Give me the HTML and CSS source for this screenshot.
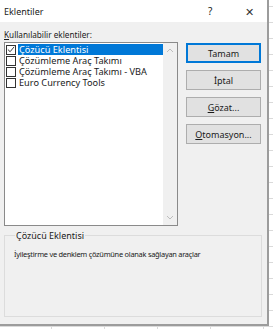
FILE: index.html
```html
<!DOCTYPE html>
<html lang="tr">
<head>
    <meta charset="UTF-8">
    <title>Eklentiler</title>
    <link rel="stylesheet" href="styles.css">
</head>
<body>
    <!-- Diyalog penceresi -->
    <div class="dialog">
        <div class="titlebar">
            <span class="title">Eklentiler</span>
            <span class="help">?</span>
            <span class="close">✕</span>
        </div>

        <div class="dialog-body">
            <div class="list-label"><u>K</u>ullanılabilir eklentiler:</div>

            <div class="main-row">
                <!-- Eklenti listesi -->
                <div class="listbox">
                    <div class="items">
                        <div class="item selected">
                            <span class="check checked">
                                <svg width="9" height="9" viewBox="0 0 9 9"><path d="M1 4.5 L3.5 7 L8 1.5" fill="none" stroke="#222" stroke-width="1"/></svg>
                            </span>
                            <span class="item-text">Çözücü Eklentisi</span>
                        </div>
                        <div class="item">
                            <span class="check"></span>
                            <span class="item-text">Çözümleme Araç Takımı</span>
                        </div>
                        <div class="item">
                            <span class="check"></span>
                            <span class="item-text">Çözümleme Araç Takımı - VBA</span>
                        </div>
                        <div class="item">
                            <span class="check"></span>
                            <span class="item-text">Euro Currency Tools</span>
                        </div>
                    </div>
                    <div class="scrollbar">
                        <svg width="8" height="6" viewBox="0 0 8 6"><path d="M1 5 L4 2 L7 5" fill="none" stroke="#bdbdbd" stroke-width="1"/></svg>
                        <svg width="8" height="6" viewBox="0 0 8 6"><path d="M1 1 L4 4 L7 1" fill="none" stroke="#bdbdbd" stroke-width="1"/></svg>
                    </div>
                </div>

                <!-- Butonlar -->
                <div class="buttons">
                    <button class="btn default">Tamam</button>
                    <button class="btn">İptal</button>
                    <button class="btn"><u>G</u>özat...</button>
                    <button class="btn"><u>O</u>tomasyon...</button>
                </div>
            </div>

            <!-- Açıklama kutusu -->
            <fieldset class="groupbox">
                <legend>Çözücü Eklentisi</legend>
                <p class="desc">İyileştirme ve denklem çözümüne olanak sağlayan araçlar</p>
            </fieldset>
        </div>
    </div>
</body>
</html>
```

FILE: styles.css
```css
body {
    margin: 0;
    width: 273px;
    height: 329px;
    overflow: hidden;
    font-family: 'Noto Sans', 'Open Sans', sans-serif;
    color: #1a1a1a;
    /* Excel hücre çizgileri */
    background-color: #fff;
    background-image:
        linear-gradient(#dadada 1px, transparent 1px),
        linear-gradient(90deg, #dadada 1px, transparent 1px);
    background-size: 53px 16px;
    background-position: 51px 6px;
}

/* Diyalog */
.dialog {
    width: 267px;
    height: 324px;
    background: #f0f0f0;
    border-right: 2px solid #9c9c9c;
    border-bottom: 2px solid #9c9c9c;
    display: flex;
    flex-direction: column;
}

.titlebar {
    height: 22px;
    background: #fff;
    display: flex;
    align-items: center;
    padding-left: 4px;
    font-size: 9px;
}

.title {
    flex: 1;
}

.help {
    width: 37px;
    font-size: 10px;
}

.close {
    width: 22px;
    font-size: 11px;
    color: #333;
}

.dialog-body {
    flex: 1;
    display: flex;
    flex-direction: column;
    padding: 7px 5px 7px 4px;
}

.list-label {
    font-size: 8.2px;
    line-height: 11px;
    margin-bottom: 2px;
}

.list-label u,
.btn u {
    text-decoration-thickness: 1px;
    text-underline-offset: 1px;
}

.main-row {
    display: flex;
    gap: 8px;
    height: 184px;
}

/* Liste */
.listbox {
    width: 172px;
    border: 1px solid #8a8a8a;
    background: #fff;
    display: flex;
}

.items {
    flex: 1;
    padding-top: 1px;
    padding-left: 1px;
}

.item {
    display: flex;
    align-items: center;
    height: 11px;
    font-size: 9.2px;
    line-height: 11px;
}

.check {
    width: 10px;
    height: 10px;
    border: 1px solid #333;
    background: #fff;
    box-sizing: border-box;
    display: flex;
    align-items: center;
    justify-content: center;
    margin-right: 2px;
}

.item-text {
    flex: 1;
    height: 11px;
    overflow: hidden;
    padding-left: 1px;
}

.item.selected .item-text {
    background: #0078d7;
    color: #fff;
}

.scrollbar {
    width: 14px;
    background: #f0f0f0;
    display: flex;
    flex-direction: column;
    justify-content: space-between;
    align-items: center;
    padding: 4px 0;
}

/* Butonlar */
.buttons {
    display: flex;
    flex-direction: column;
    gap: 7px;
    padding-top: 1px;
}

.btn {
    width: 75px;
    height: 20px;
    background: #e1e1e1;
    border: 1px solid #adadad;
    font-family: inherit;
    font-size: 9px;
    color: #1a1a1a;
    padding: 0;
}

.btn.default {
    border: 1px solid #0078d7;
    box-shadow: inset 0 0 0 1px #0078d7;
}

/* Açıklama */
.groupbox {
    margin: 3px 0 0 0;
    padding: 7px 8px 5px 9px;
    border: 1px solid #dcdcdc;
    flex: 1;
    min-height: 0;
}

.groupbox legend {
    font-size: 9px;
    padding: 0 1px;
    margin-left: 1px;
}

.desc {
    margin: 0;
    font-size: 7.4px;
    letter-spacing: -0.25px;
    white-space: nowrap;
}
```
